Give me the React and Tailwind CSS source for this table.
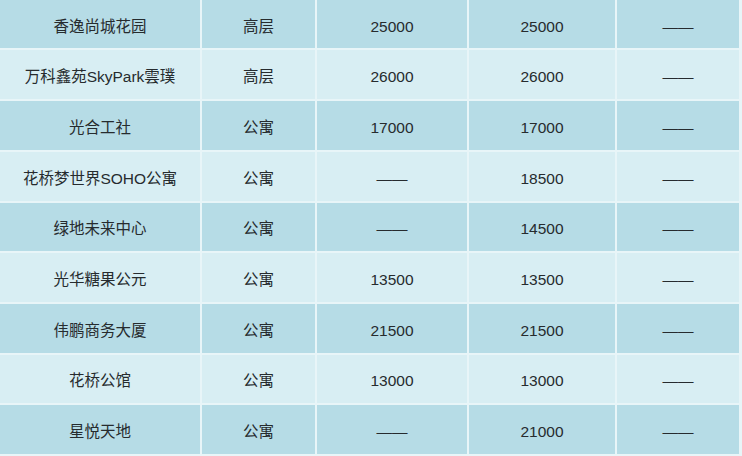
const rows = [
  ['香逸尚城花园', '高层', '25000', '25000', '——'],
  ['万科鑫苑SkyPark雲璞', '高层', '26000', '26000', '——'],
  ['光合工社', '公寓', '17000', '17000', '——'],
  ['花桥梦世界SOHO公寓', '公寓', '——', '18500', '——'],
  ['绿地未来中心', '公寓', '——', '14500', '——'],
  ['光华糖果公元', '公寓', '13500', '13500', '——'],
  ['伟鹏商务大厦', '公寓', '21500', '21500', '——'],
  ['花桥公馆', '公寓', '13000', '13000', '——'],
  ['星悦天地', '公寓', '——', '21000', '——'],
];

export default function App() {
  return (
    <div
      className="w-[742px] h-[456px] overflow-hidden bg-[#e8f5f8] pr-[3px] pb-[2px] flex flex-col gap-y-[2px] text-[15.5px] text-[#262b2e]"
      style={{ fontFamily: '"Liberation Sans", "Noto Sans CJK SC", sans-serif' }}
    >
      {rows.map((row, i) => (
        <div
          key={i}
          className={`grid grid-cols-[200px_113px_150px_146px_1fr] gap-x-[2px] ${i === 0 ? 'h-[48.5px]' : 'h-[48.8px]'}`}
        >
          {row.map((cell, j) => (
            <div
              key={j}
              className={`flex items-center justify-center pt-1 whitespace-nowrap ${i % 2 === 0 ? 'bg-[#b6dce6]' : 'bg-[#d8eef3]'}`}
            >
              {cell}
            </div>
          ))}
        </div>
      ))}
    </div>
  );
}
